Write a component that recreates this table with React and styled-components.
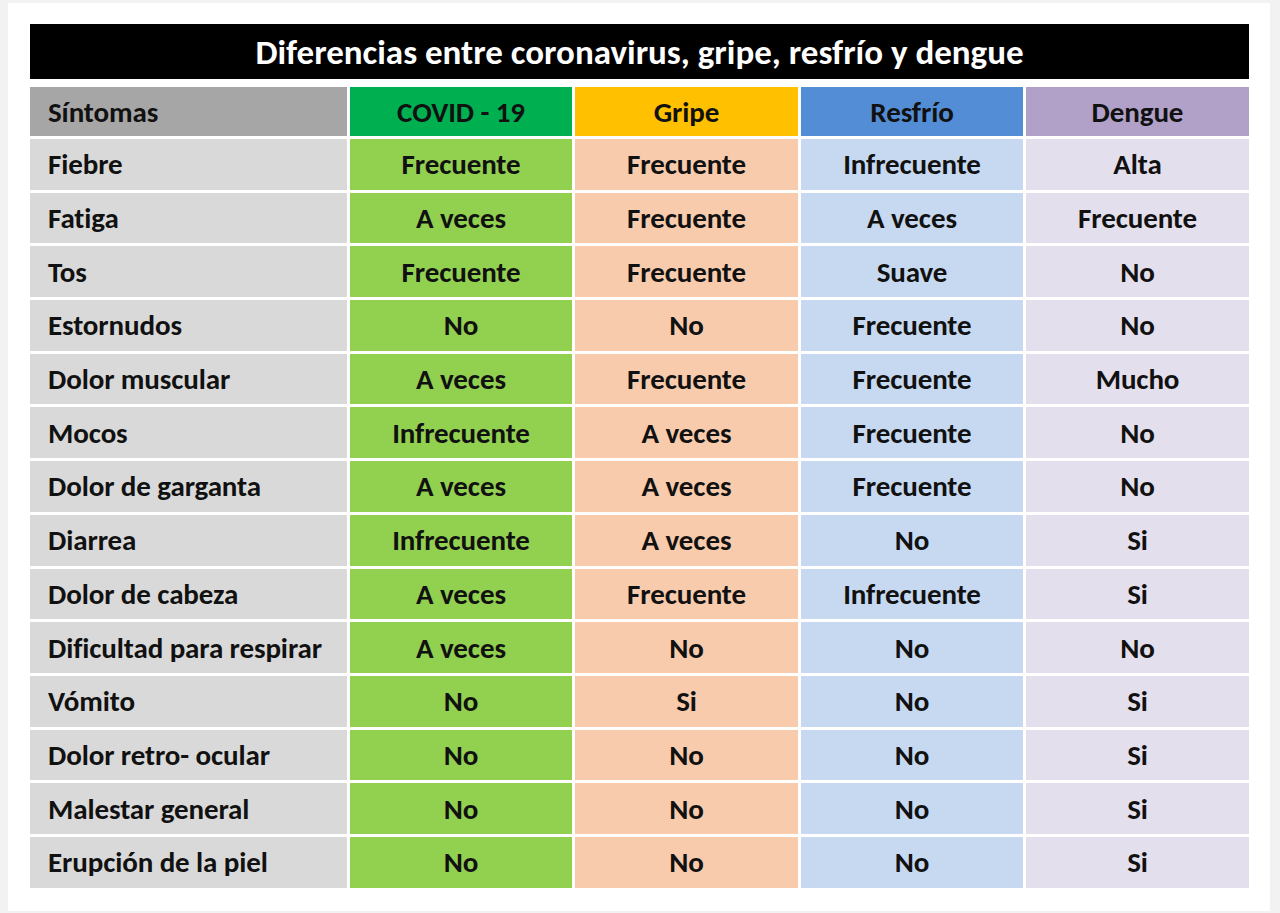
import React from "react";
import styled, { createGlobalStyle } from "styled-components";

const GlobalStyle = createGlobalStyle`
  html, body {
    margin: 0;
    padding: 0;
    background: #f2f2f2;
  }
  body {
    font-family: Calibri, Carlito, Lato, "Liberation Sans", sans-serif;
  }
`;

const Frame = styled.div`
  width: 1280px;
  height: 913px;
  padding: 3px 10px 2px 8px;
  box-sizing: border-box;
`;

const Panel = styled.div`
  background: #fff;
  height: 100%;
  box-sizing: border-box;
  padding: 21px 21px 0 22px;
  display: flex;
  flex-direction: column;
  gap: 8px;
`;

const Title = styled.div`
  height: 55px;
  background: #000;
  color: #fff;
  font-weight: 700;
  font-size: 35px;
  display: flex;
  align-items: center;
  justify-content: center;
  padding-top: 1px;
  box-sizing: border-box;
`;

const Table = styled.div`
  display: grid;
  grid-template-columns: 317px 222px 223px 222px 223px;
  grid-template-rows: 49px repeat(14, 50.7px);
  column-gap: 3px;
  row-gap: 3px;
`;

const columns = {
  symptom: { head: "#a6a6a6", body: "#d9d9d9" },
  covid: { head: "#00b050", body: "#92d050" },
  gripe: { head: "#ffc000", body: "#f8cbad" },
  resfrio: { head: "#538dd5", body: "#c6d9f1" },
  dengue: { head: "#b1a0c7", body: "#e4dfec" },
};

const Cell = styled.div`
  background: ${(p) => (p.$head ? columns[p.$col].head : columns[p.$col].body)};
  color: #111;
  font-weight: 700;
  font-size: 29px;
  letter-spacing: -0.1px;
  display: flex;
  align-items: center;
  justify-content: ${(p) => (p.$col === "symptom" ? "flex-start" : "center")};
  padding: ${(p) => (p.$col === "symptom" ? "0 0 0 18px" : "0")};
  white-space: nowrap;
`;

const rows = [
  ["Fiebre", "Frecuente", "Frecuente", "Infrecuente", "Alta"],
  ["Fatiga", "A veces", "Frecuente", "A veces", "Frecuente"],
  ["Tos", "Frecuente", "Frecuente", "Suave", "No"],
  ["Estornudos", "No", "No", "Frecuente", "No"],
  ["Dolor muscular", "A veces", "Frecuente", "Frecuente", "Mucho"],
  ["Mocos", "Infrecuente", "A veces", "Frecuente", "No"],
  ["Dolor de garganta", "A veces", "A veces", "Frecuente", "No"],
  ["Diarrea", "Infrecuente", "A veces", "No", "Si"],
  ["Dolor de cabeza", "A veces", "Frecuente", "Infrecuente", "Si"],
  ["Dificultad para respirar", "A veces", "No", "No", "No"],
  ["Vómito", "No", "Si", "No", "Si"],
  ["Dolor retro- ocular", "No", "No", "No", "Si"],
  ["Malestar general", "No", "No", "No", "Si"],
  ["Erupción de la piel", "No", "No", "No", "Si"],
];

const keys = ["symptom", "covid", "gripe", "resfrio", "dengue"];
const headers = ["Síntomas", "COVID - 19", "Gripe", "Resfrío", "Dengue"];

const App = () => {
  return (
    <>
      <GlobalStyle />
      <Frame>
        <Panel>
          <Title>Diferencias entre coronavirus, gripe, resfrío y dengue</Title>
          <Table>
            {headers.map((h, i) => (
              <Cell key={h} $head $col={keys[i]}>
                {h}
              </Cell>
            ))}
            {rows.map((row) =>
              row.map((text, i) => (
                <Cell key={row[0] + i} $col={keys[i]}>
                  {text}
                </Cell>
              ))
            )}
          </Table>
        </Panel>
      </Frame>
    </>
  );
};

export default App;
